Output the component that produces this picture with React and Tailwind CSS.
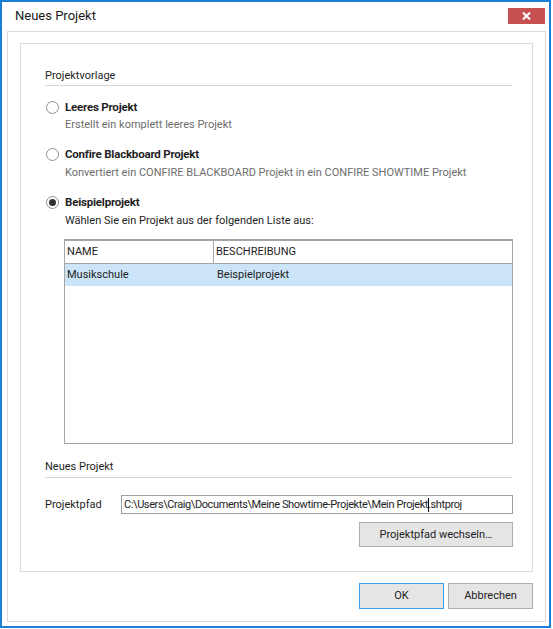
import React from "react";

const font = { fontFamily: 'Roboto, "Noto Sans", sans-serif' };

function Radio({ checked }) {
  return (
    <span className="ml-px flex h-[13px] w-[13px] shrink-0 items-center justify-center rounded-full border border-[#8f8f8f] bg-white">
      {checked && <span className="h-[7px] w-[7px] rounded-full bg-[#333333]" />}
    </span>
  );
}

function Option({ label, desc, checked, descClass }) {
  return (
    <>
      <div className="flex h-4 items-center gap-[6px]">
        <Radio checked={checked} />
        <span className="text-[11.5px] font-bold tracking-[-0.2px] text-[#1f1f1f]">{label}</span>
      </div>
      <div className={`pl-5 ${descClass}`}>{desc}</div>
    </>
  );
}

export default function App() {
  return (
    <div
      className="h-[628px] w-[551px] border-2 border-[#1c7ed6] bg-white text-[11px] leading-4 text-[#1e1e1e]"
      style={font}
    >
      {/* title bar */}
      <div className="flex h-[29px] items-start justify-between pl-[13px] pr-[4px]">
        <span className="mt-[5px] text-[13px] leading-[18px] text-[#1a1a1a]">Neues Projekt</span>
        <button className="mt-[6px] flex h-[16px] w-[37px] items-center justify-center bg-[#c75050]">
          <svg width="9" height="8" viewBox="0 0 9 8">
            <path d="M1 0.5 L8 7.5 M8 0.5 L1 7.5" stroke="white" strokeWidth="2" />
          </svg>
        </button>
      </div>

      <div className="ml-[5px] h-[591px] w-[539px] border border-[#d9d9d9] bg-white pl-[12px] pr-[12px] pt-[11px]">
        {/* group box */}
        <div className="h-[529px] w-[513px] border border-[#dcdcdc] pl-6 pt-6">
          <div className="w-[467px] border-b border-[#d5d5d5] pb-px text-[#1e1e1e]">Projektvorlage</div>

          <div className="mt-[13px]">
            <Option
              label="Leeres Projekt"
              desc="Erstellt ein komplett leeres Projekt"
              descClass="mt-[2px] text-[#6d6d6d]"
            />
          </div>
          <div className="mt-[13px]">
            <Option
              label="Confire Blackboard Projekt"
              desc="Konvertiert ein CONFIRE BLACKBOARD Projekt in ein CONFIRE SHOWTIME Projekt"
              descClass="mt-[3px] text-[#6d6d6d]"
            />
          </div>
          <div className="mt-[13px]">
            <Option
              label="Beispielprojekt"
              desc="Wählen Sie ein Projekt aus der folgenden Liste aus:"
              checked
              descClass="mt-[3px] text-[#1e1e1e]"
            />
          </div>

          {/* list */}
          <div className="ml-[19px] mt-[10px] h-[205px] w-[449px] border border-[#a5a5a5] border-t-2 bg-white">
            <div className="flex h-[23px] border-b border-[#a5a5a5]">
              <div className="flex w-[149px] items-center border-r border-[#a5a5a5] pl-[2px]">NAME</div>
              <div className="flex items-center pl-[2px]">BESCHREIBUNG</div>
            </div>
            <div className="flex h-[22px] bg-[#cce4f7]">
              <div className="flex w-[149px] items-center pl-[2px]">Musikschule</div>
              <div className="flex items-center pl-[3px]">Beispielprojekt</div>
            </div>
          </div>

          <div className="mt-[15px] w-[467px] border-b border-[#d5d5d5] pb-[2px]">Neues Projekt</div>

          <div className="mt-[17px] flex items-center">
            <span className="w-[76px]">Projektpfad</span>
            <div className="flex h-[19px] w-[392px] items-center border border-[#a0a0a0] px-[2px] tracking-[-0.4px] whitespace-nowrap">
              <span>C:\Users\Craig\Documents\Meine Showtime-Projekte\Mein Projekt</span>
              <span className="mx-[-0.5px] h-[14px] w-px bg-black" />
              <span>.shtproj</span>
            </div>
          </div>

          <div className="mt-[8px] flex w-[468px] justify-end">
            <button className="h-[25px] w-[154px] border border-[#adadad] bg-[#e5e5e5] text-[#222]">
              Projektpfad wechseln…
            </button>
          </div>
        </div>

        {/* dialog buttons */}
        <div className="mt-[11px] flex w-[513px] justify-end gap-[4px]">
          <button className="h-[26px] w-[85px] border border-[#3c9cf0] bg-[#e5e5e5] text-[#222]">OK</button>
          <button className="h-[26px] w-[85px] border border-[#adadad] bg-[#e5e5e5] text-[#222]">Abbrechen</button>
        </div>
      </div>
    </div>
  );
}
